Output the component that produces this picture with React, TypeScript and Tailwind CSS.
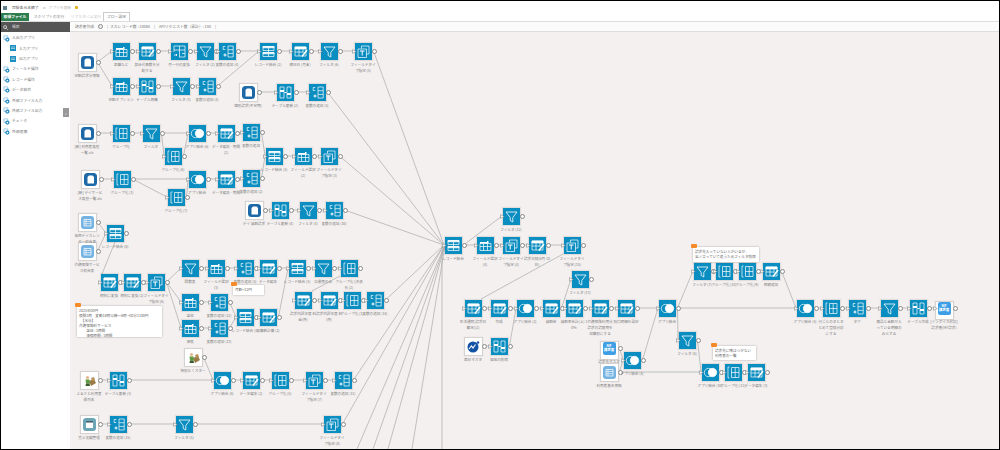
import type { ReactNode } from 'react';

const FONT = "font-['Noto_Sans_CJK_JP','Noto_Sans',sans-serif]";
const ORIGIN_X = 70;
const ORIGIN_Y = 33;

type Kind =
  | 'table' | 'edit' | 'filter' | 'addvar' | 'merge' | 'fieldtype' | 'group' | 'arrange' | 'join' | 'split'
  | 'source' | 'list' | 'pic' | 'cal' | 'logo' | 'mf';

type FlowNode = { id: string; kind: Kind; x: number; y: number; label: string };

const nodes: FlowNode[] = [
  { id: 's1', kind: 'source', x: 87, y: 63, label: '定額請求分情報' },
  { id: 'a1', kind: 'table', x: 121, y: 52, label: '退職など' },
  { id: 'a2', kind: 'edit', x: 147, y: 52, label: '振込代無数を分割する' },
  { id: 'a3', kind: 'split', x: 179, y: 52, label: '月一行の変換' },
  { id: 'a4', kind: 'filter', x: 205, y: 52, label: 'フィルタ (2)' },
  { id: 'a5', kind: 'addvar', x: 227, y: 52, label: '変数の追加 (4)' },
  { id: 'a6', kind: 'merge', x: 268, y: 52, label: 'レコード結合 (2)' },
  { id: 'a7', kind: 'edit', x: 300, y: 52, label: '締日日 (月末)' },
  { id: 'a8', kind: 'filter', x: 329, y: 52, label: 'フィルタ (6)' },
  { id: 'a9', kind: 'fieldtype', x: 363, y: 52, label: 'フィールドタイプ指定 (5)' },
  { id: 'b1', kind: 'table', x: 121, y: 87, label: '定額オプション' },
  { id: 'b2', kind: 'arrange', x: 147, y: 87, label: 'テーブル再構' },
  { id: 'b3', kind: 'filter', x: 181, y: 87, label: 'フィルタ (3)' },
  { id: 'b4', kind: 'addvar', x: 207, y: 87, label: '変数の追加 (4)' },
  { id: 's2', kind: 'source', x: 248, y: 93, label: '個別請求(不定期)' },
  { id: 'c1', kind: 'arrange', x: 285, y: 93, label: 'テーブル更新 (2)' },
  { id: 'c2', kind: 'addvar', x: 317, y: 93, label: '変数の追加 (5)' },
  { id: 's3', kind: 'source', x: 87, y: 134, label: '[新] 利用者負担一覧.xls' },
  { id: 'd1', kind: 'group', x: 121, y: 134, label: 'グループ化' },
  { id: 'd2', kind: 'filter', x: 151, y: 134, label: 'フィルタ' },
  { id: 'd3', kind: 'join', x: 197, y: 134, label: 'アプリ結合 (6)' },
  { id: 'd4', kind: 'edit', x: 226, y: 134, label: 'データ編集 - 期間 (2)' },
  { id: 'd5', kind: 'addvar', x: 251, y: 133, label: '変数の追加' },
  { id: 'd6', kind: 'group', x: 173, y: 157, label: 'グループ化 (6)' },
  { id: 'e1', kind: 'merge', x: 274, y: 157, label: 'レコード結合 (5)' },
  { id: 'e2', kind: 'table', x: 303, y: 157, label: 'フィールド選択 (2)' },
  { id: 'e3', kind: 'fieldtype', x: 329, y: 157, label: 'フィールドタイプ指定 (3)' },
  { id: 's4', kind: 'source', x: 90, y: 180, label: '[新] デイサービス負担一覧.xls' },
  { id: 'f1', kind: 'group', x: 122, y: 180, label: 'グループ化 (3)' },
  { id: 'f2', kind: 'join', x: 197, y: 180, label: 'アプリ結合' },
  { id: 'f3', kind: 'edit', x: 226, y: 180, label: 'データ編集 - 期間' },
  { id: 'f4', kind: 'addvar', x: 251, y: 179, label: '変数の追加 (2)' },
  { id: 'f5', kind: 'group', x: 176, y: 198, label: 'グループ化 (7)' },
  { id: 's5', kind: 'source', x: 254, y: 211, label: 'デイ 減額請求' },
  { id: 'g1', kind: 'arrange', x: 280, y: 211, label: 'テーブル更新 (4)' },
  { id: 'g2', kind: 'filter', x: 308, y: 211, label: 'フィルタ (4)' },
  { id: 'g3', kind: 'addvar', x: 334, y: 211, label: '変数の追加 (10)' },
  { id: 'l1', kind: 'list', x: 87, y: 223, label: '仮想デイカレンダー統合表' },
  { id: 'l2', kind: 'list', x: 87, y: 252, label: '介護保険サービス統合表' },
  { id: 'h1', kind: 'merge', x: 115, y: 234, label: 'レコード結合 (8)' },
  { id: 'i1', kind: 'edit', x: 109, y: 283, label: '時刻に変換' },
  { id: 'i2', kind: 'edit', x: 132, y: 283, label: '時刻に変換 (2)' },
  { id: 'i3', kind: 'fieldtype', x: 156, y: 283, label: 'フィールドタイプ指定 (6)' },
  { id: 'j1', kind: 'filter', x: 190, y: 269, label: '回数表' },
  { id: 'j2', kind: 'table', x: 216, y: 269, label: 'フィールド選択 (3)' },
  { id: 'j3', kind: 'addvar', x: 245, y: 269, label: '変数の追加 (5)' },
  { id: 'j4', kind: 'edit', x: 268, y: 269, label: 'データ編集' },
  { id: 'j5', kind: 'merge', x: 297, y: 269, label: 'レコード結合 (5)' },
  { id: 'j6', kind: 'filter', x: 323, y: 269, label: '交通費のみ' },
  { id: 'j7', kind: 'group', x: 349, y: 269, label: 'グループ化 (決済 9) (2)' },
  { id: 'k1', kind: 'table', x: 190, y: 303, label: '送迎' },
  { id: 'k2', kind: 'addvar', x: 219, y: 303, label: '変数の追加 (12)' },
  { id: 'k3', kind: 'table', x: 190, y: 329, label: '深夜' },
  { id: 'k4', kind: 'addvar', x: 219, y: 329, label: '変数の追加 (13)' },
  { id: 'k5', kind: 'merge', x: 245, y: 318, label: 'レコード結合 (5)' },
  { id: 'k6', kind: 'edit', x: 268, y: 318, label: '加算額計算 (2)' },
  { id: 'm1', kind: 'edit', x: 303, y: 301, label: '請求内訳年度 料金(序)' },
  { id: 'm2', kind: 'edit', x: 329, y: 301, label: '請求内訳年度 料(序)' },
  { id: 'm3', kind: 'group', x: 352, y: 301, label: 'グループ化 (1)' },
  { id: 'm4', kind: 'addvar', x: 375, y: 301, label: '変数の追加 (14)' },
  { id: 'p1', kind: 'pic', x: 193, y: 358, label: '特別おくスター' },
  { id: 'p2', kind: 'pic', x: 89, y: 381, label: 'ふるさと利用者 標列名' },
  { id: 'n1', kind: 'arrange', x: 118, y: 381, label: 'テーブル更新 (3)' },
  { id: 'n2', kind: 'join', x: 222, y: 381, label: 'アプリ結合 (8)' },
  { id: 'n3', kind: 'edit', x: 251, y: 381, label: 'データ編集 (2)' },
  { id: 'n4', kind: 'group', x: 280, y: 381, label: 'グループ化 (5)' },
  { id: 'n5', kind: 'fieldtype', x: 314, y: 381, label: 'フィールドタイプ指定 (7)' },
  { id: 'n6', kind: 'addvar', x: 343, y: 381, label: '変数の追加 (11)' },
  { id: 'q1', kind: 'cal', x: 89, y: 425, label: '売上実績管理' },
  { id: 'q2', kind: 'addvar', x: 118, y: 425, label: '変数の追加 (15)' },
  { id: 'q3', kind: 'filter', x: 184, y: 425, label: 'フィルタ (5)' },
  { id: 'q4', kind: 'fieldtype', x: 332, y: 425, label: 'フィールドタイプ指定 (8)' },
  { id: 'M', kind: 'merge', x: 453, y: 246, label: 'レコード結合' },
  { id: 'r1', kind: 'filter', x: 511, y: 217, label: 'フィルタ (12)' },
  { id: 'r2', kind: 'table', x: 485, y: 246, label: 'フィールド選択 (4)' },
  { id: 'r3', kind: 'fieldtype', x: 511, y: 246, label: 'フィールドタイプ指定 (4)' },
  { id: 'r4', kind: 'edit', x: 537, y: 246, label: '請求日録(6月 10日)' },
  { id: 'r5', kind: 'fieldtype', x: 572, y: 246, label: 'フィールドタイプ指定 (15)' },
  { id: 't0', kind: 'filter', x: 580, y: 280, label: 'フィルタ (13)' },
  { id: 't1', kind: 'edit', x: 473, y: 309, label: '生活通院(請求日算定)(2)' },
  { id: 't2', kind: 'edit', x: 499, y: 309, label: '作成' },
  { id: 't3', kind: 'join', x: 525, y: 309, label: 'アプリ結合 (2)' },
  { id: 't4', kind: 'edit', x: 551, y: 309, label: '減額後' },
  { id: 't5', kind: 'edit', x: 574, y: 309, label: '減額率合計(上) 10%' },
  { id: 't6', kind: 'edit', x: 600, y: 309, label: '介護保険利用分 請求の請限期を 加算別にする' },
  { id: 't7', kind: 'edit', x: 626, y: 309, label: '別口明細を設定' },
  { id: 't8', kind: 'join', x: 667, y: 309, label: 'アプリ結合' },
  { id: 'u1', kind: 'logo', x: 473, y: 347, label: '西日マスタ' },
  { id: 'u2', kind: 'arrange', x: 499, y: 347, label: '借地の削除' },
  { id: 'u3', kind: 'mf', x: 609, y: 349, label: '請求先マスタ' },
  { id: 'u4', kind: 'list', x: 609, y: 373, label: '利用者基本情報' },
  { id: 'u5', kind: 'join', x: 632, y: 361, label: 'アプリ結合 (4)' },
  { id: 'v1', kind: 'filter', x: 687, y: 341, label: 'フィルタ (8)' },
  { id: 'w1', kind: 'filter', x: 702, y: 272, label: 'フィルタ (7)' },
  { id: 'w2', kind: 'group', x: 724, y: 272, label: 'グループ化 (10)' },
  { id: 'w3', kind: 'group', x: 747, y: 272, label: 'グループ化 (9)' },
  { id: 'w4', kind: 'edit', x: 771, y: 272, label: '相続追加' },
  { id: 'x1', kind: 'join', x: 805, y: 309, label: 'アプリ結合 (5)' },
  { id: 'x2', kind: 'group', x: 831, y: 309, label: '行ごとのまとまとめて登録分析にする' },
  { id: 'x3', kind: 'addvar', x: 857, y: 309, label: 'タグ' },
  { id: 'x4', kind: 'filter', x: 889, y: 309, label: '商品と金額が入っている明細のみとする' },
  { id: 'x5', kind: 'arrange', x: 918, y: 309, label: 'テーブル作成' },
  { id: 'x6', kind: 'mf', x: 944, y: 309, label: '[インボイス対応] 請求書(MF請求)' },
  { id: 'y1', kind: 'join', x: 710, y: 373, label: 'アプリ結合 (10)' },
  { id: 'y2', kind: 'group', x: 733, y: 373, label: 'グループ化 (11)' },
  { id: 'y3', kind: 'edit', x: 756, y: 373, label: 'データ編集 (3)' },
];

const chains = [
  's1 a1 a2 a3 a4 a5 a6 a7 a8 a9 M',
  's1 b1 b2 b3 b4 a6',
  's2 c1 c2 M',
  's3 d1 d2 d3 d4 d5 e1 e2 e3 M',
  'd2 d6 d3',
  's4 f1 f2 f3 f4 e1',
  'f1 f5 f2',
  's5 g1 g2 g3 M',
  'l1 h1',
  'l2 h1',
  'i1 i2 i3 j1 j2 j3 j4 j5 j6 j7',
  'i3 k1 k2 k5 k6 j5',
  'i3 k3 k4 k5',
  'm1 m2 m3 m4 M',
  'p1 n2',
  'p2 n1 n2 n3 n4 n5 n6 M',
  'q4 M',
  'M r1',
  'M r2 r3 r4 r5',
  't1 t2 t3 t4 t5 t6 t7 t8',
  't4 t0',
  'u1 u2 t3',
  'u3 u5 t8',
  'u4 u5',
  't8 w1 w2 w3 w4 x1 x2 x3 x4 x5 x6',
  't8 x1',
  't8 v1 y1 y2 y3',
];

const thickChains = ['q1 q2 q3 q4', 'u4 y1'];

// lines that do not leave from a regular port
const extraLines = [
  [115, 243, 102, 275],
  [312, 292, 340, 277],
  [481, 300, 563, 255],
  [357, 450, 445, 246],
  [373, 450, 445, 246],
  [388, 450, 445, 246],
  [412, 450, 445, 246],
  [442, 246, 442, 450],
];

const nodeById = new Map(nodes.map((n) => [n.id, n]));

const APP_KINDS: Kind[] = ['source', 'list', 'pic', 'cal', 'logo', 'mf'];

function outPort(n: FlowNode) {
  return [n.x + 10.5 - ORIGIN_X, n.y - ORIGIN_Y];
}

function inPort(n: FlowNode) {
  return [n.x - 9 - ORIGIN_X, n.y - ORIGIN_Y];
}

function chainSegments(chain: string) {
  const ids = chain.split(' ');
  return ids.slice(1).map((id, i) => {
    const [x1, y1] = outPort(nodeById.get(ids[i])!);
    const [x2, y2] = inPort(nodeById.get(id)!);
    return { x1, y1, x2, y2, key: `${ids[i]}-${id}` };
  });
}

function Glyph({ kind }: { kind: Kind }) {
  const common = { fill: 'none', stroke: 'white', strokeWidth: 0.7 };
  let body: ReactNode = null;
  if (kind === 'table') {
    body = (
      <g {...common}>
        <path d="M3 6.5h11v7H3z" />
        <path d="M3 9.5h11M6.5 6.5v7M10.5 6.5v7" />
        <path d="M3 6.5V5h7V4h1.5v2.5z" fill="white" stroke="none" />
      </g>
    );
  } else if (kind === 'edit') {
    body = (
      <g {...common}>
        <path d="M3 4h11v9H3z" />
        <path d="M3 4h11v2H3z" fill="white" />
        <path d="M3 9h8M7 6v7M11 6v4" />
        <path d="M15 7l-5 6.5" strokeWidth={1.5} />
      </g>
    );
  } else if (kind === 'filter') {
    body = <path {...common} strokeWidth={0.8} d="M3 4h11l-4.2 5.5v4.5l-2.6-1.5v-3z" />;
  } else if (kind === 'addvar') {
    body = (
      <g {...common}>
        <path d="M6.3 3.5H4.2v3h2.1" />
        <path d="M4.5 12h3M6 10.5v3" strokeWidth={1} />
        <path d="M9 3h5.2v11H9zM9 6.7h5.2M9 10.4h5.2" />
      </g>
    );
  } else if (kind === 'merge') {
    body = (
      <g {...common}>
        <path d="M3 3.5h11v4H3zM3 9.5h11v4H3z" />
        <path d="M3 3.5h11v1.3H3zM3 9.5h11v1.3H3z" fill="white" />
        <path d="M8.5 3.5v10" />
      </g>
    );
  } else if (kind === 'fieldtype') {
    body = (
      <g {...common}>
        <path d="M6.5 5.5V3H14v8h-2.5" />
        <path d="M3 6h8.5v8.5H3z" />
        <path d="M5 8h4.5M7.2 8v4.5" strokeWidth={1} />
      </g>
    );
  } else if (kind === 'group') {
    body = (
      <g {...common}>
        <path d="M4.5 3H3v11h1.5" />
        <path d="M6.5 3.5h7.5v10H6.5zM6.5 8.5H14M10.2 3.5v10" />
      </g>
    );
  } else if (kind === 'arrange') {
    body = (
      <g>
        <path d="M3 3h4v11H3zM10 3h4v11h-4z" fill="none" stroke="white" strokeWidth="0.7" />
        <path d="M3 6h4v2H3zM10 9h4v2h-4zM7.5 8h2v1h-2z" fill="white" />
      </g>
    );
  } else if (kind === 'join') {
    body = (
      <g {...common}>
        <circle cx="6.5" cy="8.5" r="4.2" />
        <circle cx="10.5" cy="8.5" r="4.2" fill="white" />
      </g>
    );
  } else if (kind === 'split') {
    body = (
      <g {...common}>
        <path d="M3 3h11v11H8M3 3v6M3 7h11M8.5 3v11M11 10.5h3" />
        <path d="M3 12h3l-1-1M6 12l-1 1" strokeWidth={0.8} />
      </g>
    );
  }
  return (
    <svg viewBox="0 0 17 17" className="h-[17px] w-[17px]">
      {body}
    </svg>
  );
}

function Thumb({ kind }: { kind: Kind }) {
  if (kind === 'source') {
    return (
      <svg viewBox="0 0 17 17" className="h-[17px] w-[17px]">
        <rect x="2" y="2" width="13" height="13" rx="3.5" fill="#1d69a8" />
        <path d="M7 4.5h3.5L12 6v6.5H5.5V6z" fill="white" />
      </svg>
    );
  }
  if (kind === 'list') {
    return (
      <svg viewBox="0 0 17 17" className="h-[17px] w-[17px]">
        <rect x="2" y="2" width="13" height="13" rx="3" fill="#74b3e2" />
        <path d="M5 5.5h7v6.5H5z" fill="none" stroke="white" strokeWidth="0.7" />
        <path d="M5 7.5h7M5 9.7h7M7 5.5V12" stroke="white" strokeWidth="0.6" />
      </svg>
    );
  }
  if (kind === 'pic') {
    return (
      <svg viewBox="0 0 17 17" className="h-[17px] w-[17px]">
        <path d="M8 9l5-2 2 4-5 3z" fill="#9a7b45" />
        <path d="M10 6l3-1 1 3-3 1z" fill="#b7935c" />
        <circle cx="6.5" cy="5.5" r="1.6" fill="#e3b98b" />
        <path d="M4.5 7.5h4l.5 4H5z" fill="#5f9a43" />
        <path d="M5 11.5h3.5l.5 2.5H4.5z" fill="#3c5d2b" />
      </svg>
    );
  }
  if (kind === 'cal') {
    return (
      <svg viewBox="0 0 17 17" className="h-[17px] w-[17px]">
        <rect x="2" y="2" width="13" height="13" rx="3" fill="#6ca6b6" />
        <rect x="5" y="5" width="7" height="7" rx="0.5" fill="white" />
        <rect x="5" y="5" width="7" height="1.6" fill="#4b6470" />
      </svg>
    );
  }
  if (kind === 'logo') {
    return (
      <svg viewBox="0 0 17 17" className="h-[17px] w-[17px]">
        <circle cx="8" cy="9" r="5.5" fill="#1353a5" />
        <path d="M4 11l2.5-3 1.5 2 2.5-3.5" fill="none" stroke="white" strokeWidth="1.1" />
        <circle cx="13" cy="4.5" r="1.2" fill="#1353a5" />
      </svg>
    );
  }
  return (
    <div className="m-[2px] flex h-[13px] w-[13px] flex-col items-center justify-center rounded-[2px] bg-[#3f9fe6] text-[3.5px] font-bold leading-[4px] text-white">
      <span>MF</span>
      <span>請求書</span>
    </div>
  );
}

function NodeBox({ node }: { node: FlowNode }) {
  const isApp = APP_KINDS.includes(node.kind);
  return (
    <div
      className="absolute w-[17px]"
      style={{ left: node.x - 8.5 - ORIGIN_X, top: node.y - 8.5 - ORIGIN_Y }}
    >
      {isApp ? (
        <div className="h-[17px] w-[17px] bg-white shadow-[0_0_1px_1px_rgba(0,0,0,0.12)]">
          <Thumb kind={node.kind} />
        </div>
      ) : (
        <div className="h-[17px] w-[17px] bg-[#0a8dc0] shadow-[0_0_1px_1px_rgba(0,0,0,0.08)]">
          <Glyph kind={node.kind} />
        </div>
      )}
      {(!isApp || node.id === 'x6') && (
        <svg viewBox="0 0 5 5" className="absolute left-[-3px] top-[6px] h-[5px] w-[5px]">
          <path d="M.5.7L4.3 2.5.5 4.3z" fill="white" stroke="#888" strokeWidth="0.6" />
        </svg>
      )}
      <div className="absolute left-[17px] top-[6px] h-[5px] w-[5px] rounded-full border-[0.7px] border-[#888] bg-white" />
      <div className="absolute left-[-5.5px] top-[19px] w-[28px] break-all text-center text-[3.6px] leading-[6px] text-[#808080]">
        {node.label}
      </div>
    </div>
  );
}

function Note({ x, y, w, h, lines }: { x: number; y: number; w: number; h: number; lines: string[] }) {
  return (
    <div
      className="absolute whitespace-pre bg-white px-[2px] pt-[2px] text-[3.6px] leading-[5px] text-[#666] shadow-[0_0_2px_rgba(0,0,0,0.3)]"
      style={{ left: x - ORIGIN_X, top: y - ORIGIN_Y, width: w, height: h }}
    >
      <div className="absolute left-[-2px] top-[-3px] h-[4px] w-[6px] rounded-[1px] bg-[#f58a2a]" />
      {lines.map((l) => (
        <div key={l}>{l}</div>
      ))}
    </div>
  );
}

function SideIcon() {
  return (
    <svg viewBox="0 0 8 8" className="h-[7px] w-[7px] shrink-0">
      <path d="M1 1h4.5v4H1z" fill="none" stroke="#7ab8de" strokeWidth="0.8" />
      <circle cx="5" cy="5.2" r="2.4" fill="#1a87c2" />
      <circle cx="5" cy="5.2" r="1" fill="white" />
    </svg>
  );
}

function SubIcon() {
  return (
    <svg viewBox="0 0 6 6" className="h-[6px] w-[6px] shrink-0">
      <rect width="6" height="6" fill="#1a8fc0" />
      <path d="M1 2h4M1 3.5h4" stroke="white" strokeWidth="0.5" />
    </svg>
  );
}

const groups = ['フィールド操作', 'レコード操作', 'データ結合', '外部ファイル入力', '外部ファイル出力', 'チェック', '外部連携'];

export default function App() {
  return (
    <div className={`${FONT} relative box-border flex h-[450px] w-[1000px] flex-col overflow-hidden border border-black bg-white text-[3.8px] text-[#777]`}>
      <div className="flex h-[10px] items-center gap-[2px] pl-[2px] pt-[3px]">
        <div className="h-[4px] w-[4px] bg-[#607d8b]" />
        <span className="ml-[3px] text-[#555]">完掛金元本締了</span>
        <span className="ml-[2px] text-[#aaa]">⌀</span>
        <span className="ml-[2px] text-[#bbb]">アプリを更新</span>
        <div className="ml-[2px] h-[3px] w-[3px] rounded-[1px] bg-[#e0b020]" />
      </div>
      <div className="flex h-[11px] items-end border-b border-[#ddd]">
        <div className="flex h-[8px] w-[28px] items-center justify-center bg-[#2e7d4f] font-bold text-white">
          取得ファイル
        </div>
        <div className="flex h-[8px] w-[40px] items-center justify-center text-[#888]">スクリプトの実行</div>
        <div className="flex h-[8px] w-[34px] items-center justify-center text-[#c4c4c4]">リアルタイム実行</div>
        <div className="flex h-[9px] w-[27px] items-center justify-center border border-b-0 border-[#ccc] bg-white">
          フロー設定
        </div>
      </div>
      <div className="flex h-[10px]">
        <div className="flex w-[69px] items-center gap-[2px] bg-[#555] pl-[2px] text-[#ddd]">
          <svg viewBox="0 0 6 6" className="h-[5px] w-[5px]">
            <circle cx="2.5" cy="2.5" r="1.8" fill="none" stroke="white" strokeWidth="0.8" />
            <path d="M4 4l1.6 1.6" stroke="white" strokeWidth="0.8" />
          </svg>
          <span className="ml-[2px]">検索</span>
        </div>
        <div className="flex flex-1 items-center gap-[2px] border-b border-[#ddd] bg-[#fbfbfb] pl-[5px]">
          <span>請求書作成</span>
          <span className="mx-[2px] flex h-[5px] w-[5px] items-center justify-center rounded-full border-[0.5px] border-[#888] text-[3px]">✓</span>
          <span>|</span>
          <span>スカレコード数 : 10068</span>
          <span className="ml-[2px]">|</span>
          <span className="ml-[2px]">APIリクエスト数（累計）: 184</span>
          <span className="ml-[2px]">|</span>
        </div>
      </div>
      <div className="flex min-h-0 flex-1">
        <div className="relative flex w-[69px] flex-col gap-[2.4px] pl-[2px] pt-[2px]">
          <div className="flex h-[8px] items-center gap-[2px]">
            <SideIcon />
            <span>入出力アプリ</span>
          </div>
          <div className="flex h-[8px] items-center gap-[3px] pl-[7px]">
            <SubIcon />
            <span>入力アプリ</span>
          </div>
          <div className="flex h-[8px] items-center gap-[3px] pl-[7px]">
            <SubIcon />
            <span>出力アプリ</span>
          </div>
          {groups.map((g) => (
            <div key={g} className="flex h-[8px] items-center gap-[2px]">
              <SideIcon />
              <span>{g}</span>
            </div>
          ))}
          <div className="absolute left-[62px] top-[76px] flex h-[9px] w-[6px] items-center justify-center bg-[#999] text-[5px] text-white">
            ‹
          </div>
        </div>
        <div className="relative flex-1 overflow-hidden bg-[#f4f0f0]">
          <svg className="absolute inset-0 h-full w-full">
            <g stroke="#a9a9a9" strokeWidth="0.7">
              {chains.flatMap(chainSegments).map(({ key, ...s }) => (
                <line key={key} {...s} />
              ))}
              {extraLines.map(([x1, y1, x2, y2]) => (
                <line
                  key={`${x1}-${y1}-${x2}`}
                  x1={x1 - ORIGIN_X}
                  y1={y1 - ORIGIN_Y}
                  x2={x2 - ORIGIN_X}
                  y2={y2 - ORIGIN_Y}
                />
              ))}
            </g>
            <g stroke="#cfcfcf" strokeWidth="1.4">
              {thickChains.flatMap(chainSegments).map(({ key, ...s }) => (
                <line key={key} {...s} />
              ))}
            </g>
          </svg>
          {nodes.map((n) => (
            <NodeBox key={n.id} node={n} />
          ))}
          <Note x={233} y={286} w={31} h={10} lines={['月額+12円']} />
          <Note
            x={77}
            y={307}
            w={85}
            h={31}
            lines={[
              '2025年00円',
              '夜間1時　変動18時以降〜8時 ~00分1100円',
              '　【水泳】',
              '介護保険料サービス',
              '　　送迎 : 1時間',
              '　　深夜時間 : 1時間',
            ]}
          />
          <Note x={693} y={248} w={66} h={15} lines={['請求先入っていない人がいるが、', '全ノ立っていて追うためフィルタ削除']} />
          <Note x={713} y={347} w={43} h={14} lines={['請求先に残はつがない', '利用者の一覧']} />
        </div>
      </div>
    </div>
  );
}
